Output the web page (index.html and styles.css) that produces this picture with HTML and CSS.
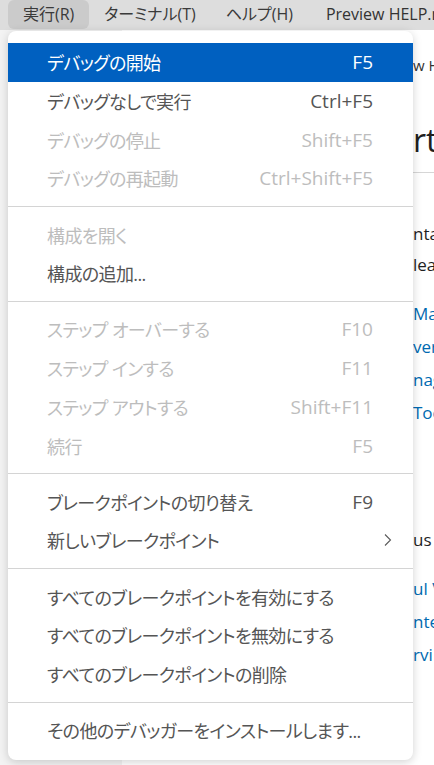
FILE: index.html
```html
<!DOCTYPE html>
<html lang="ja">
<head>
<meta charset="utf-8">
<title>実行メニュー</title>
<link rel="stylesheet" href="styles.css">
</head>
<body>
<div class="titlebar">
  <div class="mb-item active">実行(R)</div>
  <div class="mb-item">ターミナル(T)</div>
  <div class="mb-item">ヘルプ(H)</div>
  <div class="title">Preview HELP.md - Visual Studio Code</div>
</div>
<div class="workbench">
  <div class="sidebar"></div>
  <div class="editor">
    <div class="doc">
      <div class="tab">w HELP.md</div>
      <div class="heading">rt</div>
      <div class="rule"></div>
      <div class="line l-first">ntact</div>
      <div class="line l-second">leas</div>
      <div class="links">
        <div class="link">Ma</div>
        <div class="link">ver</div>
        <div class="link">nag</div>
        <div class="link">Too</div>
      </div>
      <div class="line l-us">us</div>
      <div class="links links-2">
        <div class="link">ul V</div>
        <div class="link">nte</div>
        <div class="link">rvi</div>
      </div>
    </div>
  </div>
</div>

<div class="menu">
  <div class="item selected"><span class="label">デバッグの開始</span><span class="key">F5</span></div>
  <div class="item"><span class="label">デバッグなしで実行</span><span class="key">Ctrl+F5</span></div>
  <div class="item disabled"><span class="label">デバッグの停止</span><span class="key">Shift+F5</span></div>
  <div class="item disabled"><span class="label">デバッグの再起動</span><span class="key">Ctrl+Shift+F5</span></div>
  <div class="sep"></div>
  <div class="item disabled"><span class="label">構成を開く</span></div>
  <div class="item"><span class="label">構成の追加...</span></div>
  <div class="sep"></div>
  <div class="item disabled"><span class="label">ステップ オーバーする</span><span class="key">F10</span></div>
  <div class="item disabled"><span class="label">ステップ インする</span><span class="key">F11</span></div>
  <div class="item disabled"><span class="label">ステップ アウトする</span><span class="key">Shift+F11</span></div>
  <div class="item disabled"><span class="label">続行</span><span class="key">F5</span></div>
  <div class="sep"></div>
  <div class="item"><span class="label">ブレークポイントの切り替え</span><span class="key">F9</span></div>
  <div class="item"><span class="label">新しいブレークポイント</span><svg class="chev" width="10" height="14" viewBox="0 0 10 14"><path d="M2 1.5 L7.5 7 L2 12.5" fill="none" stroke="#5a5a5a" stroke-width="1.1"/></svg></div>
  <div class="sep"></div>
  <div class="item"><span class="label">すべてのブレークポイントを有効にする</span></div>
  <div class="item"><span class="label">すべてのブレークポイントを無効にする</span></div>
  <div class="item"><span class="label">すべてのブレークポイントの削除</span></div>
  <div class="sep"></div>
  <div class="item"><span class="label">その他のデバッガーをインストールします...</span></div>
</div>
</body>
</html>
```
FILE: styles.css
```css
html, body {
  margin: 0;
  padding: 0;
}
body {
  width: 434px;
  height: 765px;
  overflow: hidden;
  position: relative;
  background: #ffffff;
  font-family: "Open Sans", "Noto Sans CJK JP", sans-serif;
  font-feature-settings: "palt";
}

/* title bar */
.titlebar {
  height: 30px;
  background: #dddddd;
  display: flex;
  align-items: stretch;
  padding-left: 8px;
  white-space: nowrap;
  overflow: hidden;
}
.mb-item {
  padding: 0 15px;
  height: 29px;
  line-height: 29px;
  font-size: 16px;
  color: #3a3a3a;
  border-radius: 6px;
}
.mb-item.active {
  background: #cbcbcb;
}
.title {
  margin-left: 18px;
  line-height: 29px;
  font-size: 16px;
  color: #333333;
}

/* workbench behind the menu */
.workbench {
  display: grid;
  grid-template-columns: 122px 1fr;
  height: 735px;
}
.sidebar {
  background: #f3f3f3;
}
.editor {
  background: #ffffff;
  overflow: hidden;
}
.doc {
  padding-left: 291px;
  white-space: nowrap;
  color: #1f1f1f;
}
.tab {
  height: 70px;
  line-height: 70px;
  font-size: 15px;
  color: #333333;
}
.heading {
  margin-top: 20px;
  height: 40px;
  line-height: 40px;
  font-size: 32px;
  color: #1f1f1f;
}
.rule {
  margin-top: 12px;
  border-top: 1px solid #d6d6d6;
}
.line {
  font-size: 17px;
  color: #1f1f1f;
}
.l-first {
  margin-top: 45px;
  height: 31px;
  line-height: 31px;
}
.l-second {
  height: 32px;
  line-height: 32px;
}
.links {
  margin-top: 16px;
}
.link {
  height: 33px;
  line-height: 33px;
  font-size: 17px;
  color: #006ab1;
}
.l-us {
  margin-top: 94px;
  height: 33px;
  line-height: 33px;
}
.links-2 {
  margin-top: 16px;
}

/* dropdown menu */
.menu {
  position: absolute;
  top: 31px;
  left: 8px;
  width: 405px;
  box-sizing: border-box;
  padding: 12px 0 10px;
  background: #ffffff;
  border-radius: 8px;
  box-shadow: 0 2px 10px rgba(0, 0, 0, 0.18);
  font-size: 19px;
  color: #555555;
}
.item {
  height: 38.7px;
  display: flex;
  align-items: center;
  padding: 0 40px 0 39px;
  white-space: nowrap;
}
.item .label {
  flex: 1;
  font-size: 18px;
  letter-spacing: -0.6px;
}
.item .key {
  text-align: right;
}
.item.selected {
  background: #0060c0;
  color: #ffffff;
}
.item.disabled {
  color: #bdbdbd;
}
.chev {
  margin-right: -20px;
}
.sep {
  height: 17.5px;
  display: flex;
  align-items: center;
}
.sep::before {
  content: "";
  flex: 1;
  border-top: 1px solid #d4d4d4;
}
```
